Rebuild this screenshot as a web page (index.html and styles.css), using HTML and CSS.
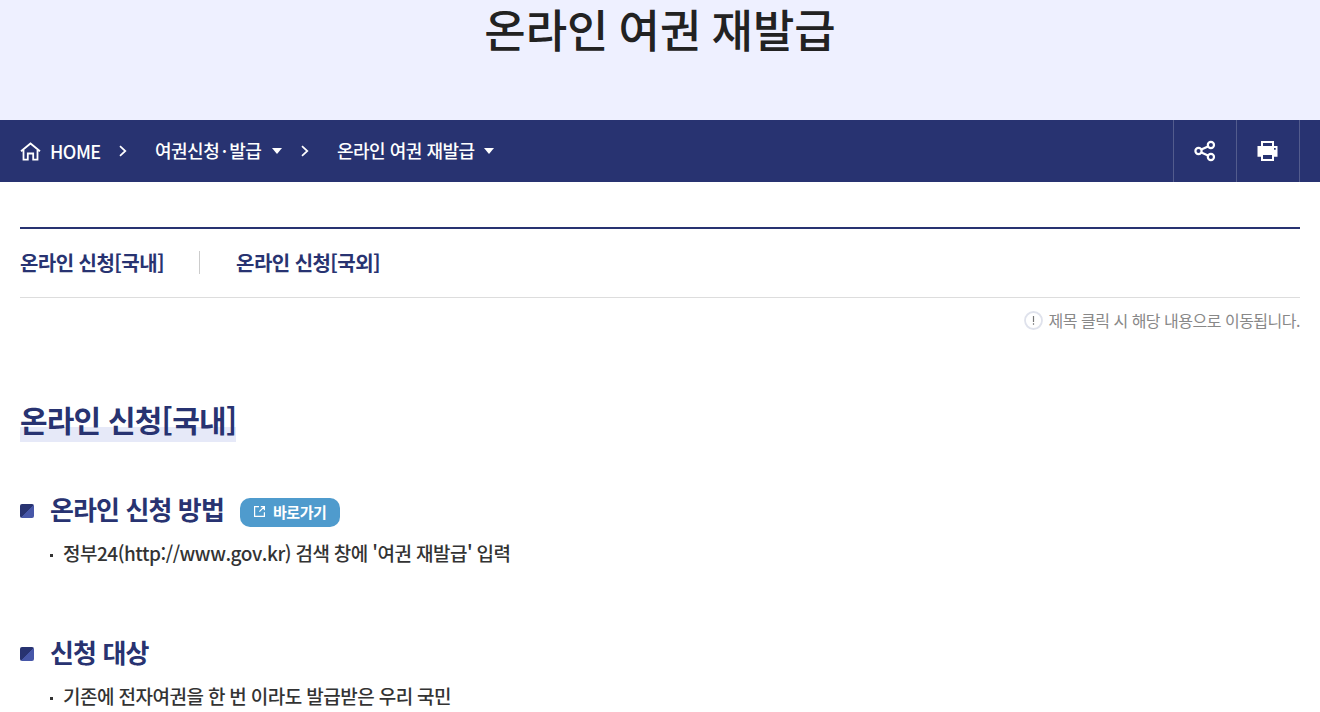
FILE: index.html
```html
<!DOCTYPE html>
<html lang="ko">
<head>
    <meta charset="UTF-8">
    <meta name="viewport" content="width=device-width, initial-scale=1.0">
    <title>온라인 여권 재발급</title>
    <link rel="stylesheet" href="styles.css">
</head>
<body>
    <header class="page-title">
        <h1>온라인 여권 재발급</h1>
    </header>

    <nav class="location">
        <a href="#" class="home">
            <svg width="21" height="19" viewBox="0 0 21 19" fill="none" stroke="#fff" stroke-width="1.8">
                <path d="M1 9.3 10.5 1.5 20 9.3M3.5 8v9.7h4.3v-6.2h5.4v6.2h4.3V8"/>
            </svg>
            <span>HOME</span>
        </a>
        <svg class="arrow" width="8" height="12" viewBox="0 0 8 12" fill="none" stroke="#fff" stroke-width="1.7"><path d="M1 1.2 6.3 6 1 10.8"/></svg>
        <a href="#" class="depth depth1"><span>여권신청<b>·</b>발급</span><i class="caret"></i></a>
        <svg class="arrow" width="8" height="12" viewBox="0 0 8 12" fill="none" stroke="#fff" stroke-width="1.7"><path d="M1 1.2 6.3 6 1 10.8"/></svg>
        <a href="#" class="depth depth2"><span>온라인 여권 재발급</span><i class="caret"></i></a>

        <div class="tools">
            <button type="button" aria-label="공유">
                <svg width="22" height="22" viewBox="0 0 22 22" fill="none" stroke="#fff" stroke-width="2.2">
                    <circle cx="4.5" cy="11" r="3.1"/>
                    <circle cx="16.9" cy="5" r="3.1"/>
                    <circle cx="16.9" cy="17" r="3.1"/>
                    <path d="M7.3 9.6 14 6.4M7.3 12.4l6.7 3.2"/>
                </svg>
            </button>
            <button type="button" aria-label="인쇄">
                <svg class="print" width="21" height="20" viewBox="0 0 21 20">
                    <path fill="#fff" fill-rule="evenodd" d="M4 0h13v5h3.5v10.7H17V20H4v-4.3H.5V5H4zM6 2v3h9V2zM6 14v4h9v-4zM17 7v1.700h1.700V7z"/>
                </svg>
            </button>
        </div>
    </nav>

    <main class="content">
        <ul class="anchor-list">
            <li><a href="#domestic">온라인 신청[국내]</a></li>
            <li><a href="#overseas">온라인 신청[국외]</a></li>
        </ul>
        <p class="notice">
            <svg width="19" height="19" viewBox="0 0 19 19" fill="none">
                <circle cx="9.5" cy="9.5" r="8.5" stroke="#dfe2ec" stroke-width="1.8"/>
                <path d="M9.5 5v6M9.5 12.3v1.5" stroke="#777" stroke-width="1.2"/>
            </svg>
            <span>제목 클릭 시 해당 내용으로 이동됩니다.</span>
        </p>

        <h2 id="domestic"><span>온라인 신청[국내]</span></h2>

        <section>
            <h3>
                <span>온라인 신청 방법</span>
                <a href="#" class="btn">
                    <svg width="11" height="11" viewBox="0 0 11 11" fill="none" stroke="#fff" stroke-width="1.2">
                        <path d="M5 .6H.6v9.8h9.8V6.2M6.8.6h3.6v3.6M10.4.6 5.4 5.6"/>
                    </svg>
                    바로가기
                </a>
            </h3>
            <ul class="dot-list">
                <li>정부24(http://www.gov.kr) 검색 창에 '여권 재발급' 입력</li>
            </ul>
        </section>

        <section>
            <h3><span>신청 대상</span></h3>
            <ul class="dot-list">
                <li>기존에 전자여권을 한 번 이라도 발급받은 우리 국민</li>
            </ul>
        </section>
    </main>
</body>
</html>
```
FILE: styles.css
```css
* {
    box-sizing: border-box;
    margin: 0;
    padding: 0;
}

body {
    font-family: 'Noto Sans CJK KR', sans-serif;
    font-size: 18px;
    font-weight: 500;
    color: #333;
    background-color: #fff;
    overflow: hidden;
}

a {
    color: inherit;
    text-decoration: none;
}

ul {
    list-style: none;
}

svg {
    display: block;
    flex: none;
}

.page-title {
    height: 120px;
    background-color: #eef0ff;
    text-align: center;
}

.page-title h1 {
    font-size: 45px;
    font-weight: 500;
    line-height: 58px;
    word-spacing: -2.5px;
    color: #222;
}

/* breadcrumb */
.location {
    display: flex;
    align-items: center;
    height: 62px;
    padding: 0 20px;
    background-color: #283371;
    color: #fff;
    letter-spacing: -0.5px;
}

.home {
    display: flex;
    align-items: center;
    gap: 9px;
    width: 80px;
}

.arrow {
    margin: 0 28px 0 19px;
}

.depth {
    display: flex;
    align-items: center;
    justify-content: space-between;
    white-space: nowrap;
}

.depth span {
    padding-bottom: 2px;
}

.depth b {
    margin: 0 2.5px;
    font-weight: 500;
}

.depth1 {
    width: 127px;
}

.depth2 {
    width: 157px;
}

.caret {
    border: 5px solid transparent;
    border-top: 6px solid #fff;
    border-bottom: 0;
}

.tools {
    display: flex;
    height: 100%;
    margin-left: auto;
    border-right: 1px solid #535c8d;
}

.tools button {
    display: flex;
    align-items: center;
    justify-content: center;
    width: 63px;
    border: 0;
    border-left: 1px solid #535c8d;
    background: none;
}

.print {
    margin-right: 2px;
}

.content {
    padding: 45px 20px 0;
}

.anchor-list {
    display: flex;
    align-items: center;
    height: 71px;
    padding-bottom: 1px;
    border-top: 2px solid #283371;
    border-bottom: 1px solid #ddd;
    font-size: 20px;
    font-weight: 700;
    line-height: 23px;
    letter-spacing: -0.55px;
    color: #283371;
}

.anchor-list li + li {
    margin-left: 35px;
    padding-left: 36px;
    border-left: 1px solid #ccc;
}

.notice {
    display: flex;
    align-items: center;
    justify-content: flex-end;
    gap: 6px;
    height: 46px;
    padding-bottom: 2px;
    font-size: 16px;
    font-weight: 400;
    letter-spacing: -0.5px;
    color: #888;
}

h2 {
    margin-top: 56px;
    font-size: 30px;
    font-weight: 700;
    line-height: 38px;
    letter-spacing: -0.8px;
    color: #283371;
}

h2 span {
    display: inline-block;
    height: 42px;
    background: linear-gradient(transparent 27px, #e6e9f8 27px);
}

section {
    margin-top: 50px;
}

section + section {
    margin-top: 57px;
}

h3 {
    display: flex;
    align-items: center;
    height: 38px;
    font-size: 26px;
    font-weight: 700;
    letter-spacing: -0.9px;
    color: #283371;
}

h3 span {
    padding-bottom: 5px;
}

h3::before {
    content: '';
    width: 14px;
    height: 14px;
    margin-right: 16px;
    border-radius: 2px;
    background: linear-gradient(135deg, #283371 50%, #4757a8 50%);
}

.btn {
    display: flex;
    align-items: center;
    gap: 8px;
    width: 100px;
    height: 29px;
    margin: 3px 0 0 16px;
    padding: 0 0 2px 14px;
    border-radius: 10px;
    background-color: #4f9bcd;
    font-size: 15px;
    letter-spacing: -0.4px;
    color: #fff;
}

.dot-list li {
    display: flex;
    align-items: center;
    height: 48px;
    margin-left: 30px;
    padding-bottom: 4px;
    font-size: 19px;
    letter-spacing: -0.48px;
    word-spacing: -0.4px;
}

.dot-list li::before {
    content: '';
    width: 3px;
    height: 3px;
    margin: 6px 10px 0 0;
    background-color: #333;
}
```
